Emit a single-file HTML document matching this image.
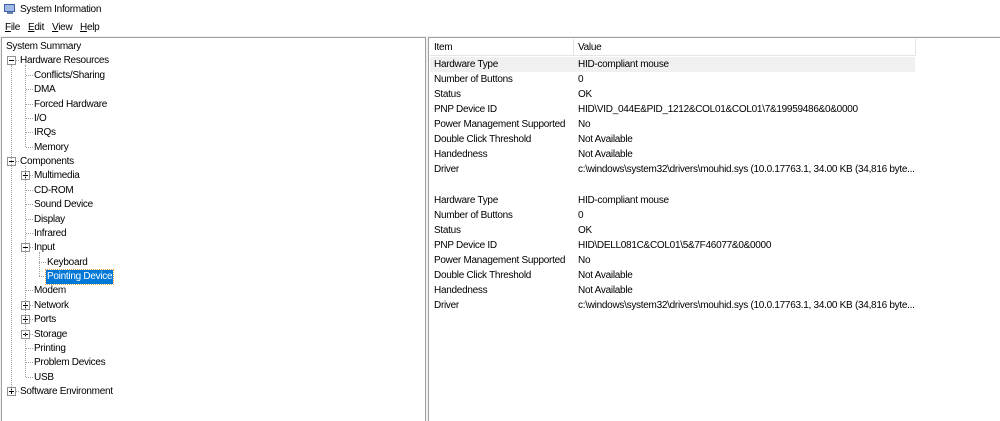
<!DOCTYPE html>
<html><head><meta charset="utf-8"><style>
*{margin:0;padding:0;box-sizing:border-box}
body{width:1000px;height:421px;background:#fff;font-family:"Liberation Sans",sans-serif;font-size:10px;letter-spacing:-0.28px;color:#000;position:relative;overflow:hidden}
.a{position:absolute;white-space:nowrap;line-height:14px}
.box{position:absolute;width:9px;height:9px;border:1px solid #919191;background:#fff}
.box:before{content:"";position:absolute;left:1px;top:3px;width:5px;height:1px;background:#000}
.box.p:after{content:"";position:absolute;left:3px;top:1px;width:1px;height:5px;background:#000}
.vl{position:absolute;width:0;border-left:1px dotted #a0a0a0}
.hl{position:absolute;height:0;border-top:1px dotted #a0a0a0}
</style></head><body>
<svg class="a" style="left:3px;top:2px" width="14" height="14" viewBox="0 0 14 14"><rect x="1" y="2" width="11" height="8" fill="#3b5ea8"/><rect x="2" y="3" width="9" height="6" fill="#9fb8e6"/><rect x="4" y="10" width="6" height="2" fill="#6a7fa8"/></svg>
<div class="a" style="left:20px;top:3px">System Information</div>
<div class="a" style="left:5px;top:21px"><u>F</u>ile</div>
<div class="a" style="left:28px;top:21px"><u>E</u>dit</div>
<div class="a" style="left:52px;top:21px"><u>V</u>iew</div>
<div class="a" style="left:80px;top:21px"><u>H</u>elp</div>
<div style="position:absolute;left:0;top:36px;width:1000px;height:385px;background:#f0f0f0"></div>
<div style="position:absolute;left:1px;top:37px;width:425px;height:384px;background:#fff;border:1px solid #a0a0a0;border-bottom:none"></div>
<div style="position:absolute;left:428px;top:37px;width:572px;height:384px;background:#fff;border:1px solid #a0a0a0;border-right:none;border-bottom:none"></div>
<div id="tree"></div>
<div style="position:absolute;left:430px;top:39px;width:485px;height:17px;border-bottom:1px solid #e5e5e5"></div>
<div style="position:absolute;left:573px;top:39px;width:1px;height:17px;background:#e5e5e5"></div>
<div style="position:absolute;left:915px;top:39px;width:1px;height:17px;background:#e5e5e5"></div>
<div class="a" style="left:434px;top:41px">Item</div>
<div class="a" style="left:578px;top:41px">Value</div>
<div style="position:absolute;left:430px;top:57px;width:485px;height:15px;background:#f0f0f0"></div>
<div id="right"></div>
<script>
var T=[[0,"System Summary"],[0,"Hardware Resources","m"],[1,"Conflicts/Sharing"],[1,"DMA"],[1,"Forced Hardware"],[1,"I/O"],[1,"IRQs"],[1,"Memory"],[0,"Components","m"],[1,"Multimedia","p"],[1,"CD-ROM"],[1,"Sound Device"],[1,"Display"],[1,"Infrared"],[1,"Input","m"],[2,"Keyboard"],[2,"Pointing Device","s"],[1,"Modem"],[1,"Network","p"],[1,"Ports","p"],[1,"Storage","p"],[1,"Printing"],[1,"Problem Devices"],[1,"USB"],[0,"Software Environment","p"]];
var h="",y0=40,d=14.375;
function Y(i){return Math.round(y0+i*d)}
var tx=[20,34,47];
T.forEach(function(t,i){var y=Y(i),l=t[0],x=(i==0?6:tx[l]);
 if(i>0){var bx=x-12;
  if(t[2]&&t[2]!="s"){h+='<div class="box '+(t[2]=="p"?"p":"")+'" style="left:'+(bx-1)+'px;top:'+(y+2)+'px"></div><div class="hl" style="left:'+(bx+8)+'px;top:'+(y+6)+'px;width:3px"></div>';}
  else h+='<div class="hl" style="left:'+(bx+4)+'px;top:'+(y+6)+'px;width:7px"></div>';}
 if(t[2]=="s")h+='<div class="a" style="left:'+(x-1)+'px;top:'+y+'px;background:#0078d7;color:#fff;padding:0 1px;outline:1px dotted #f0a040">'+t[1]+'</div>';
 else h+='<div class="a" style="left:'+x+'px;top:'+y+'px">'+t[1]+'</div>';
});
h+='<div class="vl" style="left:11px;top:'+(Y(1)+11)+'px;height:'+(Y(24)-Y(1)-5)+'px"></div>';
h+='<div class="vl" style="left:25px;top:'+(Y(1)+11)+'px;height:'+(Y(7)-Y(1)-5)+'px"></div>';
h+='<div class="vl" style="left:25px;top:'+(Y(8)+11)+'px;height:'+(Y(23)-Y(8)-5)+'px"></div>';
h+='<div class="vl" style="left:39px;top:'+(Y(14)+11)+'px;height:'+(Y(16)-Y(14)-5)+'px"></div>';
document.getElementById("tree").innerHTML=h;
var R=[["Hardware Type","HID-compliant mouse"],["Number of Buttons","0"],["Status","OK"],["PNP Device ID","HID\\VID_044E&PID_1212&COL01&COL01\\7&19959486&0&0000"],["Power Management Supported","No"],["Double Click Threshold","Not Available"],["Handedness","Not Available"],["Driver","c:\\windows\\system32\\drivers\\mouhid.sys (10.0.17763.1, 34.00 KB (34,816 byte..."],["",""],["Hardware Type","HID-compliant mouse"],["Number of Buttons","0"],["Status","OK"],["PNP Device ID","HID\\DELL081C&COL01\\5&7F46077&0&0000"],["Power Management Supported","No"],["Double Click Threshold","Not Available"],["Handedness","Not Available"],["Driver","c:\\windows\\system32\\drivers\\mouhid.sys (10.0.17763.1, 34.00 KB (34,816 byte..."]];
var g="";R.forEach(function(r,i){var y=58+i*15.06;y=Math.round(y);g+='<div class="a" style="left:434px;top:'+y+'px">'+r[0]+'</div><div class="a" style="left:578px;top:'+y+'px">'+r[1]+'</div>';});
document.getElementById("right").innerHTML=g;
</script>
</body></html>
